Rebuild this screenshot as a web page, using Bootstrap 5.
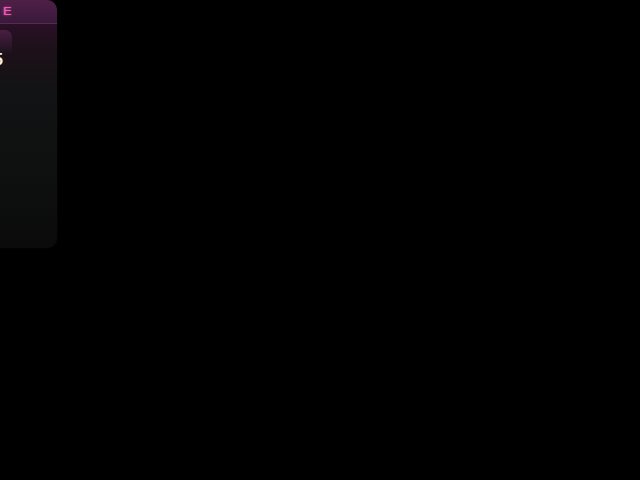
<!DOCTYPE html>
<html lang="en">
<head>
<meta charset="utf-8">
<title>Panel</title>
<link rel="stylesheet" href="https://cdn.jsdelivr.net/npm/bootstrap@5.3.0/dist/css/bootstrap.min.css">
<style>
html, body { background: #000; height: 100%; overflow: hidden; }
.glow-panel {
  width: 200px; height: 248px; margin-left: -143px;
  border: 0; border-radius: 0 10px 10px 0;
  background: linear-gradient(180deg, #2a1027 9%, #1d1019 20%, #121314 36%, #0f1010 65%, #0b0b0b 100%);
  box-shadow: 0 0 3px #0a0a0a; overflow: hidden;
}
.glow-head {
  height: 24px; padding: 0 45px 0 0; display: flex; align-items: center; justify-content: flex-end;
  background: linear-gradient(180deg, #4f1f48 0%, #391a3a 100%);
  border-bottom: 1px solid #5a2850;
}
.glow-letter {
  display: inline-block; transform: scaleX(1.35); transform-origin: right center;
  font: 400 11px/1 "DejaVu Sans", sans-serif; color: #ee5cb4;
  text-shadow: 0 0 2px #c93f98;
}
.glow-tile {
  width: 155px; height: 24px; margin-top: 6px; border-radius: 0 7px 0 0;
  background: linear-gradient(180deg, #4a1f42 0%, #30172d 55%, #1a121a 100%);
}
.glow-num {
  width: 146px; margin-top: -4px; text-align: right;
  font: 700 16px/20px "Liberation Sans", sans-serif; color: #f4f4f4;
}
</style>
</head>
<body>
<div class="card glow-panel">
  <div class="glow-head"><span class="glow-letter">E</span></div>
  <div class="glow-tile"></div>
  <div class="glow-num">5</div>
</div>
<script src="https://cdn.jsdelivr.net/npm/bootstrap@5.3.0/dist/js/bootstrap.bundle.min.js"></script>
</body>
</html>
